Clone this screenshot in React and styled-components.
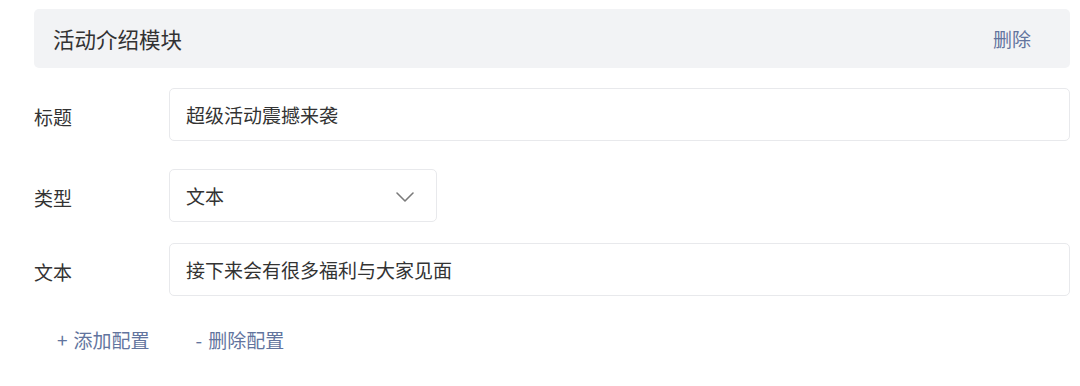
import styled, {createGlobalStyle} from "styled-components";

const GlobalStyle = createGlobalStyle`
    body {
        margin: 0;
        background: #ffffff;
        font-family: "Noto Sans CJK SC", "Noto Sans", sans-serif;
        color: #333333;
    }
`;

const Page = styled.div`
    padding: 9px 10px 0 34px;
`;

const Header = styled.div`
    display: flex;
    justify-content: space-between;
    align-items: center;
    height: 59px;
    padding: 0 39px 0 19px;
    background-color: #f2f3f5;
    border-radius: 5px;
`;

const Title = styled.h3`
    margin: 0;
    font-size: 21.5px;
    font-weight: 400;
    color: #323233;
`;

const LinkButton = styled.span`
    font-size: 19px;
    color: #62749e;
    cursor: pointer;
`;

const Sign = styled.span`
    margin-right: 6px;
`;

const Form = styled.div`
    display: flex;
    flex-direction: column;
`;

const Row = styled.div`
    display: flex;
    align-items: center;
    margin-top: ${(props) => props.top}px;
`;

const Label = styled.label`
    width: 135px;
    flex-shrink: 0;
    padding-top: 4px;
    font-size: 19px;
    color: #333333;
`;

const Field = styled.div`
    display: flex;
    align-items: center;
    justify-content: space-between;
    box-sizing: border-box;
    width: ${(props) => (props.narrow ? "268px" : "100%")};
    flex: ${(props) => (props.narrow ? "none" : "1")};
    height: 53px;
    padding: 0 21px 0 16px;
    border: 1px solid #e8e9ec;
    border-radius: 5px;
    background: #ffffff;
    font-size: 19px;
    color: #333333;
`;

const Chevron = styled.svg`
    width: 20px;
    height: 12px;
    margin-top: 2px;
`;

const Actions = styled.div`
    display: flex;
    gap: 46px;
    margin-top: 30px;
    padding-left: 23px;
`;

function App() {
    return (
        <>
            <GlobalStyle/>
            <Page>
                <Header>
                    <Title>活动介绍模块</Title>
                    <LinkButton>删除</LinkButton>
                </Header>
                <Form>
                    <Row top={20}>
                        <Label>标题</Label>
                        <Field>超级活动震撼来袭</Field>
                    </Row>
                    <Row top={28}>
                        <Label>类型</Label>
                        <Field narrow>
                            文本
                            <Chevron viewBox="0 0 20 12">
                                <path d="M2 2 L10 10 L18 2" fill="none" stroke="#7a7a7a" strokeWidth="1.6"
                                      strokeLinecap="round" strokeLinejoin="round"/>
                            </Chevron>
                        </Field>
                    </Row>
                    <Row top={21}>
                        <Label>文本</Label>
                        <Field>接下来会有很多福利与大家见面</Field>
                    </Row>
                </Form>
                <Actions>
                    <LinkButton><Sign>+</Sign>添加配置</LinkButton>
                    <LinkButton><Sign>-</Sign>删除配置</LinkButton>
                </Actions>
            </Page>
        </>
    );
}

export default App;
